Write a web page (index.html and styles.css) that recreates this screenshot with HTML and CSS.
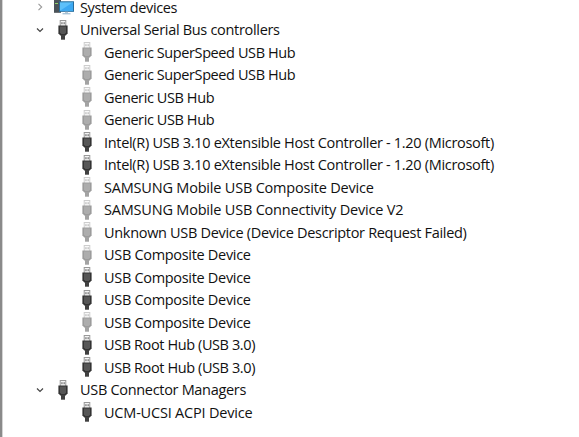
FILE: index.html
```
<!DOCTYPE html>
<html lang="en">
<head>
    <meta charset="UTF-8">
    <meta name="viewport" content="width=device-width, initial-scale=1.0">
    <title>Device Manager</title>
    <link rel="stylesheet" href="styles.css">
</head>
<body>
    <svg class="defs" width="0" height="0">
        <!-- USB plug -->
        <symbol id="usb" viewBox="0 0 10 20">
            <rect x="2.2" y="0.5" width="5.6" height="6" fill="#f4f4f4" stroke="#999" stroke-width="1"/>
            <rect x="3.4" y="2.2" width="1.1" height="2" fill="#666"/>
            <rect x="5.6" y="2.2" width="1.1" height="2" fill="#666"/>
            <path d="M0.4 5.5h9.2v7.7l-1.8 2.3h-5.6l-1.8-2.3z" fill="#333"/>
            <path d="M2 6.5h6v6l-1.3 1.5h-3.4l-1.3-1.5z" fill="#565656"/>
            <rect x="3" y="15" width="4" height="4.7" fill="#404040"/>
        </symbol>
        <symbol id="down" viewBox="0 0 8 8">
            <path d="M1 2.5l3 3 3-3" fill="none" stroke="#444" stroke-width="1.2"/>
        </symbol>
        <symbol id="right" viewBox="0 0 8 8">
            <path d="M2.5 0.8l3.2 3.2-3.2 3.2" fill="none" stroke="#999" stroke-width="1.1"/>
        </symbol>
    </svg>
    <div class="tree">
        <!-- SYSTEM DEVICES -->
        <div class="row">
            <svg class="arrow"><use href="#right"/></svg>
            <svg class="pc" viewBox="0 0 20 20">
                <rect x="0" y="0" width="7" height="15.8" fill="#4b5358"/>
                <rect x="1" y="6" width="3" height="1" fill="#8fd06a"/>
                <rect x="5.5" y="4.8" width="14" height="9.5" fill="#5cc0fa" stroke="#276c9b"/>
                <path d="M6 13.8l13-8.5v8.5z" fill="#3ba8f2"/>
                <rect x="11" y="14.8" width="3" height="1.5" fill="#b8c9d5"/>
                <rect x="8.5" y="16.3" width="8" height="1" fill="#8bb0cb"/>
            </svg>
            <span class="tight">System devices</span>
        </div>
        <!-- USB CONTROLLERS -->
        <div class="row"><svg class="arrow"><use href="#down"/></svg><svg class="usb"><use href="#usb"/></svg><span>Universal Serial Bus controllers</span></div>
        <div class="row child"><svg class="usb off"><use href="#usb"/></svg><span class="tight">Generic SuperSpeed USB Hub</span></div>
        <div class="row child"><svg class="usb off"><use href="#usb"/></svg><span class="tight">Generic SuperSpeed USB Hub</span></div>
        <div class="row child"><svg class="usb off"><use href="#usb"/></svg><span class="tight">Generic USB Hub</span></div>
        <div class="row child"><svg class="usb off"><use href="#usb"/></svg><span class="tight">Generic USB Hub</span></div>
        <div class="row child"><svg class="usb"><use href="#usb"/></svg><span>Intel(R) USB 3.10 eXtensible Host Controller - 1.20 (Microsoft)</span></div>
        <div class="row child"><svg class="usb"><use href="#usb"/></svg><span>Intel(R) USB 3.10 eXtensible Host Controller - 1.20 (Microsoft)</span></div>
        <div class="row child"><svg class="usb off"><use href="#usb"/></svg><span class="loose">SAMSUNG Mobile USB Composite Device</span></div>
        <div class="row child"><svg class="usb off"><use href="#usb"/></svg><span class="loose">SAMSUNG Mobile USB Connectivity Device V2</span></div>
        <div class="row child"><svg class="usb off"><use href="#usb"/></svg><span>Unknown USB Device (Device Descriptor Request Failed)</span></div>
        <div class="row child"><svg class="usb off"><use href="#usb"/></svg><span>USB Composite Device</span></div>
        <div class="row child"><svg class="usb"><use href="#usb"/></svg><span>USB Composite Device</span></div>
        <div class="row child"><svg class="usb"><use href="#usb"/></svg><span>USB Composite Device</span></div>
        <div class="row child"><svg class="usb off"><use href="#usb"/></svg><span>USB Composite Device</span></div>
        <div class="row child"><svg class="usb"><use href="#usb"/></svg><span class="tight">USB Root Hub (USB 3.0)</span></div>
        <div class="row child"><svg class="usb"><use href="#usb"/></svg><span class="tight">USB Root Hub (USB 3.0)</span></div>
        <!-- CONNECTOR MANAGERS -->
        <div class="row"><svg class="arrow"><use href="#down"/></svg><svg class="usb"><use href="#usb"/></svg><span>USB Connector Managers</span></div>
        <div class="row child"><svg class="usb"><use href="#usb"/></svg><span class="loose">UCM-UCSI ACPI Device</span></div>
    </div>
</body>
</html>
```
FILE: styles.css
```
* {
    box-sizing: border-box;
}
body {
    margin: 0;
    height: 437px;
    overflow: hidden;
    background-color: white;
    border-left: 2px solid #8a8a8a;
    box-shadow: inset 1px 0 #d4d4d4;
    font-family: "Open Sans", "Noto Sans", sans-serif;
    font-size: 14.5px;
    line-height: 15px;
    letter-spacing: -0.31px;
    color: #111;
}
.defs {
    display: none;
}
.tree {
    margin-top: -4px;
    padding-left: 34px;
}
.row {
    display: flex;
    align-items: center;
    height: 22.5px;
    white-space: nowrap;
}
.child {
    padding-left: 42px;
}
.tight {
    letter-spacing: -0.4px;
}
.loose {
    letter-spacing: -0.2px;
}
.arrow {
    width: 8px;
    height: 8px;
    margin-right: 10px;
}
.usb {
    width: 10px;
    height: 20px;
    margin: 0 12px 0 4px;
}
.off {
    opacity: 0.48;
}
.pc {
    width: 20px;
    height: 20px;
    margin-right: 6px;
}
```
